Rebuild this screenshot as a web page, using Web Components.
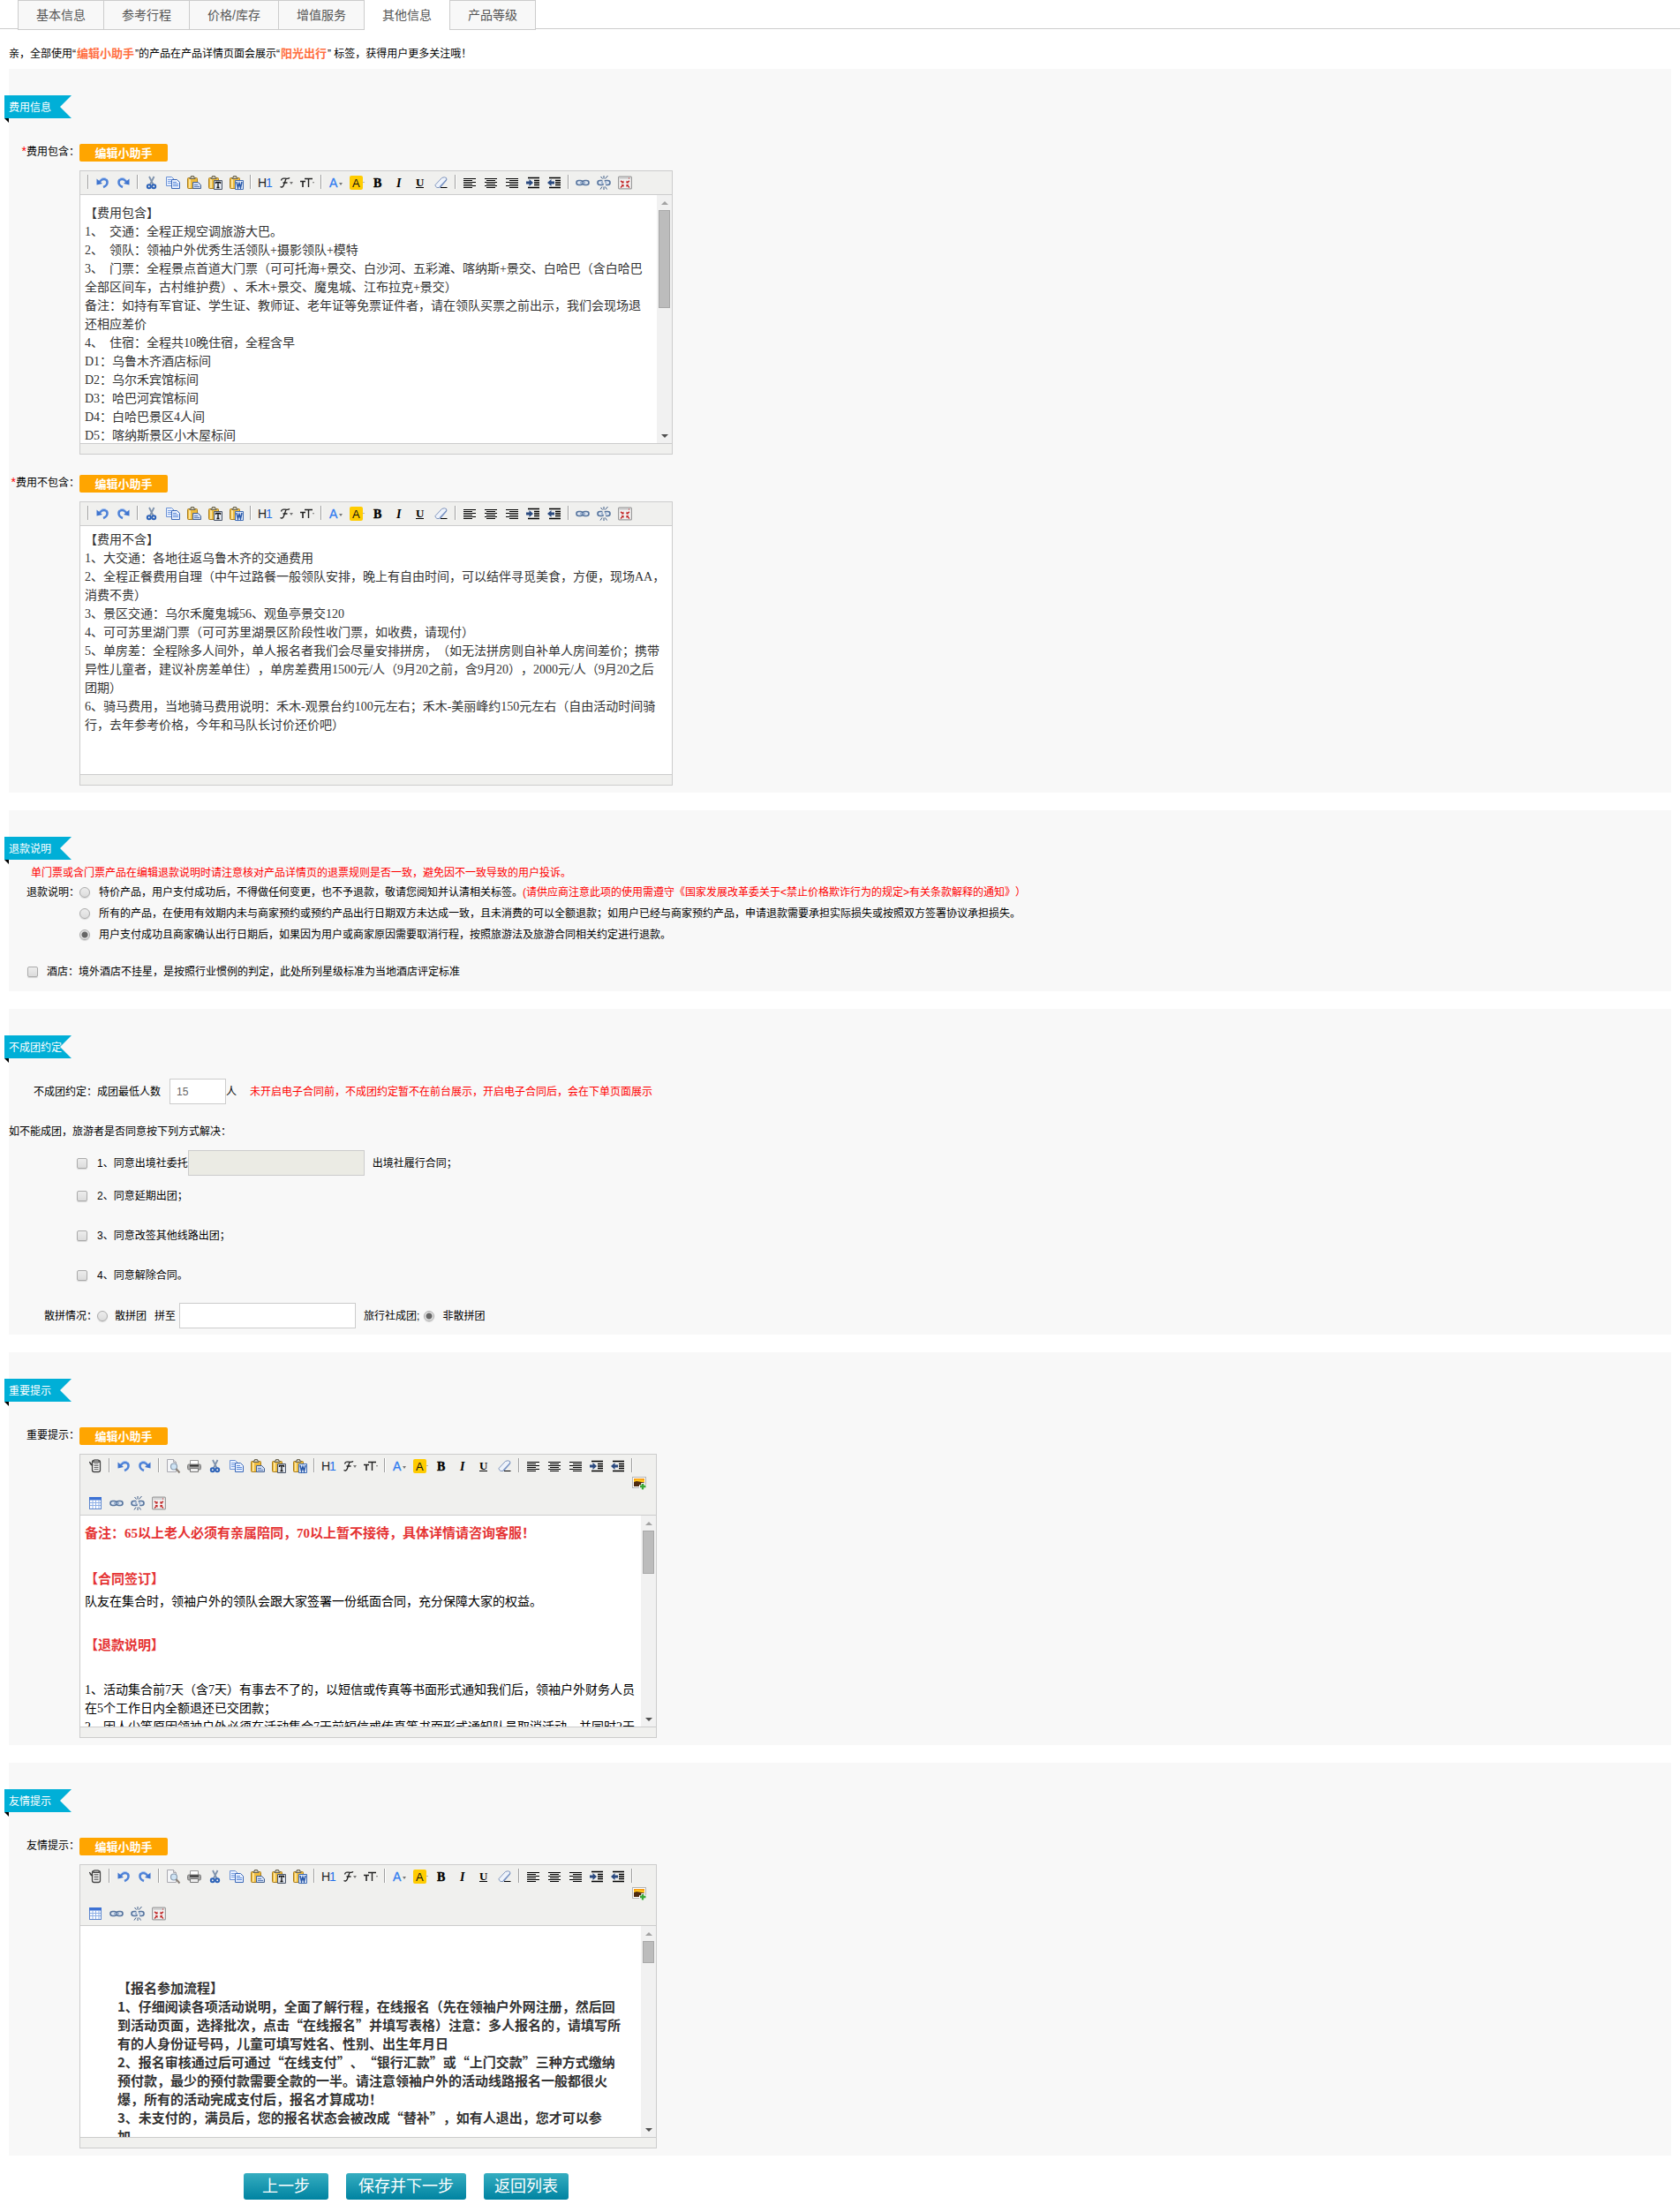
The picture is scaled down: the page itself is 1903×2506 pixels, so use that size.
<!DOCTYPE html>
<html lang="zh-CN">
<head>
<meta charset="utf-8">
<title>其他信息</title>
<style>
  html { text-spacing-trim: space-all; }
  body {
    margin: 0;
    background: #fff;
    color: #000;
    font: 12px/18px "Liberation Sans", "Noto Sans CJK SC", sans-serif;
  }
</style>
</head>
<body>
<product-form></product-form>

<script>
const define = (name, html, setup) => customElements.define(name, class extends HTMLElement {
  constructor() {
    super();
    this.attachShadow({ mode: "open" });
    const t = document.createElement("template");
    t.innerHTML = html;
    this.shadowRoot.append(t.content.cloneNode(true));
  }
  connectedCallback() {
    if (setup && !this.ready) { this.ready = true; setup(this, this.shadowRoot); }
  }
});

/* ---------- toolbar icons, 16 x 16 ---------- */
const caret = (x, y = 7) => `<path d="M${x} ${y}h4l-2 3z" fill="#777"/>`;
const lines = (rows) => rows.map(([x, w], i) => `<path d="M${x} ${3.5 + i * 2}h${w}" stroke="#000"/>`).join("");
const clipboard = `<rect x=".5" y="2.5" width="11" height="12" rx="1" fill="#eebb3e" stroke="#a87c1c"/>
  <path d="M2 4h2v10H2z" fill="#fbe39a"/><path d="M3 3.5h6V2H7.500V.5h-3V2H3z" fill="#cfc9b4" stroke="#6d6650"/>`;
const chain = `<g fill="#dfe7f2" stroke="#56749d" stroke-width="1.600"><rect x="1" y="5.500" width="7" height="5" rx="2.500"/><rect x="8" y="5.500" width="7" height="5" rx="2.500"/></g><path d="M5 8h6" stroke="#8aa3c4" stroke-width="1.500"/>`;
const icons = {
  source: `<path d="M4.500 3.500v9q0 2 2 2h5q2 0 2-2v-9q0-2-2-2h-5q-2 0-2 2z" fill="#f4f4f4" stroke="#444" stroke-width="1.300"/><path d="M6.500 1h5l1 2.500h-7z" fill="#aaa" stroke="#444"/><path d="M6.500 5.500h5M6.500 7.500h5M6.500 9.500h5M6.500 11.500h5" stroke="#666"/><path d="M1 3l4 3.500-.5 1L2 5.500v-2" fill="#666" stroke="#333"/>`,
  undo: `<path d="M5 7c2-4 8-4 8.500 0 .3 3-2 5-4.500 6" fill="none" stroke="#4f83d8" stroke-width="2.600"/><path d="M5 5c2-3 6-3.500 8-1" fill="none" stroke="#a9c5f2"/><path d="M1.500 3.500v7L8 9z" fill="#3e74cf"/>`,
  redo: `<path d="M11 7c-2-4-8-4-8.500 0-.3 3 2 5 4.500 6" fill="none" stroke="#4f83d8" stroke-width="2.600"/><path d="M11 5c-2-3-6-3.500-8-1" fill="none" stroke="#a9c5f2"/><path d="M14.500 3.500v7L8 9z" fill="#3e74cf"/>`,
  preview: `<path d="M1.500.5h7l3 3v11h-10z" fill="#f5f6f8" stroke="#a9a9b0"/><path d="M8.500.5v3h3" fill="#ddd" stroke="#a9a9b0"/><circle cx="9" cy="8.500" r="3.500" fill="#cfe4f5" stroke="#8b9db0" stroke-width="1.200"/><path d="M11.500 11l4 4.500" stroke="#8a8178" stroke-width="2"/>`,
  print: `<path d="M3.500 6V1.500h9V6" fill="#fff" stroke="#999"/><rect x=".5" y="6" width="15" height="6" rx="1.500" fill="#a5a5a5" stroke="#7d7d7d"/><path d="M3 7.500h10" stroke="#333" stroke-width="2"/><path d="M3.500 10.500h9v4h-9z" fill="#eee" stroke="#777"/>`,
  cut: `<path d="M5 1l4.500 9M10.500 1L6 10" stroke="#7f93ad" stroke-width="1.800"/><g fill="none" stroke="#2c62b8" stroke-width="2"><circle cx="4.800" cy="12.300" r="2"/><circle cx="10.200" cy="12.300" r="2"/></g>`,
  copy: `<path d="M.5 1.500h6l3 3v7h-9z" fill="#e9f1ff" stroke="#6c92d4"/><path d="M2 4.500h4M2 6.500h5M2 8.500h5" stroke="#7ba1e2"/><path d="M6.500 4.500h6l3 3v7h-9z" fill="#e9f1ff" stroke="#3c69b8"/><path d="M8 7.500h4M8 9.500h6M8 11.500h6" stroke="#5d8bd9"/>`,
  paste: `${clipboard}<path d="M6.500 7.500h6l3 3v4h-9z" fill="#cfdcf3" stroke="#44608f"/><path d="M8 10.500h4M8 12.500h6" stroke="#5f7fb6"/>`,
  pasteText: `${clipboard}<path d="M6.500 5.500h9v10h-9z" fill="#dfe4ec" stroke="#4a5568"/><path d="M8 7.500h6M11 7v7M9.500 13.500h3M8.500 7v2M13.500 7v2" stroke="#111" stroke-width="1.300"/>`,
  pasteWord: `${clipboard}<path d="M6.500 5.500h9v10h-9z" fill="#e4edfb" stroke="#3f6db5"/><path d="M8 7l1.500 6.500L11 8.500l1.500 5L14 7" fill="none" stroke="#2757a8" stroke-width="1.500"/>`,
  heading: `<text x="0" y="12.500" font-family="Liberation Sans" font-size="14" fill="#222">H</text><text x="9" y="12.500" font-family="Liberation Sans" font-size="14" fill="#1f70ea">1</text>`,
  font: `<path d="M1.500 12.500c1.500 1 3.200.5 4-2L8 3.500M2.500 5.500C3 3 5 2.800 7 3.200s4 .5 5-.8M4.500 8h5" fill="none" stroke="#222" stroke-width="1.300"/>${caret(12)}`,
  size: `<path d="M0 6.500h6M3 6v7" stroke="#222" stroke-width="1.600"/><path d="M5 3.500h9M9.500 3v10" stroke="#222" stroke-width="1.400"/><path d="M14 7h2l-1 2z" fill="#777"/>`,
  color: `<text x="1" y="13" font-family="Liberation Sans" font-size="14" fill="#2f7cf0" stroke="#2f7cf0" stroke-width=".3">A</text>${caret(12, 8)}`,
  highlight: `<rect x="0" y="0" width="15" height="16" rx="2" fill="#fc0"/><text x="3" y="12.500" font-family="Liberation Sans" font-size="13" fill="#111">A</text><path d="M15.500 7.500h1" stroke="#777"/>`,
  bold: `<text x="3" y="13" font-family="Liberation Serif" font-weight="bold" font-size="14" fill="#000" stroke="#000" stroke-width=".4">B</text>`,
  italic: `<text x="5" y="13" font-family="Liberation Serif" font-weight="bold" font-style="italic" font-size="14" fill="#000">I</text>`,
  underline: `<text x="3" y="11.500" font-family="Liberation Serif" font-weight="bold" font-size="13" fill="#000">U</text><path d="M3 13.500h9" stroke="#000"/>`,
  eraser: `<path d="M1 10.500L8.500 2.500q3-1.500 5 0 1 1.500-.5 3.500L6 13.500H3q-2-1-2-3z" fill="#eef3fb" stroke="#8296bd"/><path d="M5.500 12.500L13 4.500q1-1 .5-2 1.500 1.500 0 3.500L7 13.500z" fill="#7a94c4"/><path d="M7 13.500h7.500" stroke="#000"/>`,
  left: lines([[1, 14], [1, 10], [1, 14], [1, 10], [1, 14], [1, 10]]),
  center: lines([[1, 14], [3, 10], [1, 14], [3, 10], [1, 14], [3, 10]]),
  right: lines([[1, 14], [5, 10], [1, 14], [5, 10], [1, 14], [5, 10]]),
  indent: `<path d="M2 2.500h13M2 13.500h13M9 5.500h6M9 8h6M9 10.500h6" stroke="#000" stroke-width="1.300"/><path d="M0 6.500h3.500V4L8 8l-4.500 4V9.500H0z" fill="#2b4a80"/>`,
  outdent: `<path d="M2 2.500h13M2 13.500h13M9 5.500h6M9 8h6M9 10.500h6" stroke="#000" stroke-width="1.300"/><path d="M8 6.500H4.500V4L0 8l4.500 4V9.500H8z" fill="#2b4a80"/>`,
  image: `<rect x=".5" y="1.500" width="15" height="12" fill="#fff" stroke="#b5b5b5"/><path d="M2 3h12v4H2z" fill="#f79a12"/><path d="M2 5l4-1 8 1v2H2z" fill="#ffc61a"/><path d="M2 7l3-1 9 1.500V12H2z" fill="#4d2a10"/><path d="M12 8v8M8 12h8" stroke="#fff" stroke-width="3.600"/><path d="M12 9v6.500M9 12h6.500" stroke="#3aa637" stroke-width="2.400"/>`,
  table: `<rect x="1.500" y="1.500" width="13" height="13" fill="#fff" stroke="#5d86cd"/><path d="M1 1h14v3.500H1z" fill="#3d72d4"/><path d="M5 4v10M8.500 4v10M12 4v10M2 7.500h12M2 10.500h12" stroke="#8fb0e6"/>`,
  link: chain,
  unlink: `${chain}<path d="M7 4l2.500 8" stroke="#efefee" stroke-width="2"/><path d="M8 0v3.500M4.500 1l2 2.500M12.500 0L9.500 3.500M8 12.500V16M4 15.500l2-3M11.500 15.500l-2-3" stroke="#3f5c86"/>`,
  fullscreen: `<rect x=".6" y="1.100" width="14.800" height="13.800" rx="1" fill="#f3f3f3" stroke="#9c9c9c" stroke-width="1.200"/><path d="M1.500 2h13v2h-13z" fill="#d5d5d5"/><path d="M12 3h1" stroke="#c22"/><path d="M3 6l3.200 1.800M13 6L9.800 7.800M3 13.500l3.200-3M13 13.500l-3.200-3" stroke="#c22a2a" stroke-width="1.500"/><path d="M6.500 5.500v3h-3zM9.500 5.500v3h3zM6.500 13v-3h-3zM9.500 13v-3h3z" fill="#c22a2a"/>`
};

define("tool-row", `
<style>
  :host { display: flex; }
  button { width: 24px; height: 22px; padding: 3px 4px; border: 0; margin: 0; background: none; }
  svg { display: block; width: 16px; height: 16px; overflow: visible; }
  i { width: 0; height: 16px; margin: 2px 3px; border-left: 1px solid #a0a0a0; border-right: 1px solid #fff; }
</style>`, (el, root) => {
  for (const name of el.getAttribute("tools").split(" ")) {
    if (name === "|") { root.append(document.createElement("i")); continue; }
    const b = document.createElement("button");
    b.type = "button";
    b.setAttribute("aria-label", name);
    b.innerHTML = `<svg viewBox="0 0 16 16" aria-hidden="true">${icons[name]}</svg>`;
    root.append(b);
  }
});

const editTools = "cut copy paste pasteText pasteWord | heading font size | color highlight bold italic underline eraser | left center right indent outdent |";

define("rich-editor", `
<style>
  :host { display: block; width: 672px; box-sizing: border-box; border: 1px solid #ccc; background: #fff; }
  :host([full]) { width: 654px; --body-height: 239px; }
  .bar { padding: 2px 5px; background: #f0f0ee; border-bottom: 1px solid #ccc; }
  .image { justify-content: flex-end; height: 20px; padding-right: 2px; margin-top: -3px; margin-bottom: 3px; }
  .body { display: flex; height: var(--body-height, 281px); overflow: hidden; }
  .text { flex: 1; min-width: 0; padding: 5px; overflow: hidden; outline: 0; white-space: nowrap;
    font: 14px/21px "Liberation Serif", "Noto Sans CJK SC", serif; color: #333; }
  .scroll { display: none; flex-direction: column; align-items: center; width: 17px; background: #f1f1f1; }
  :host([thumb]) .scroll { display: flex; }
  .arrow { height: 17px; display: flex; align-items: center; }
  .arrow::before { content: ""; border: 4px solid transparent; border-top-width: 0; border-bottom-color: #a3a3a3; }
  .down { margin-top: auto; }
  .down::before { border-width: 4px 4px 0; border-color: #505050 transparent transparent; }
  .thumb { width: 13px; height: var(--thumb); box-sizing: border-box; background: #bcbcbc; border: 1px solid #a8a8a8; }
  .status { height: 11px; background: #f0f0ee; border-top: 1px solid #ccc; }
</style>
<div class="bar" role="toolbar"></div>
<div class="body">
  <div class="text" role="textbox" aria-multiline="true" contenteditable="true" spellcheck="false"><slot></slot></div>
  <div class="scroll"><span class="arrow"></span><span class="thumb"></span><span class="arrow down"></span></div>
</div>
<div class="status"></div>`, (el, root) => {
  root.querySelector(".text").setAttribute("aria-label", el.getAttribute("label"));
  root.querySelector(".bar").innerHTML = el.hasAttribute("full")
    ? `<tool-row tools="source | undo redo | preview print ${editTools}"></tool-row>
       <tool-row class="image" tools="image"></tool-row>
       <tool-row tools="table link unlink fullscreen"></tool-row>`
    : `<tool-row tools="| undo redo | ${editTools} link unlink fullscreen"></tool-row>`;
  if (el.hasAttribute("thumb")) el.style.setProperty("--thumb", el.getAttribute("thumb") + "px");
});

define("page-tabs", `
<style>
  :host { display: block; }
  nav { display: flex; height: 32px; padding-left: 20px; border-bottom: 1px solid #ccc; }
  a { height: 32px; border: 1px solid #ccc; border-left-width: 0; background: #f8f8f8; padding: 0 20px;
    font-size: 14px; line-height: 33px; color: #555; text-decoration: none; }
  a:first-child, .on + a { border-left-width: 1px; }
  .on { background: #fff; border-color: #fff; border-right-width: 0; }
</style>
<nav>
  <a href="#base">基本信息</a><a href="#route">参考行程</a><a href="#price">价格/库存</a><a href="#service">增值服务</a><a href="#other" class="on" aria-current="page">其他信息</a><a href="#level">产品等级</a>
</nav>`);

define("panel-section", `
<style>
  :host { display: block; margin: 0 10px 20px; padding-top: 30px; background: #f8f8f8; }
  h2 { position: relative; width: 76px; height: 26px; margin: 0 0 0 -5px; font-size: 12px; font-weight: normal; line-height: 28px; color: #fff; }
  h2 span { display: block; height: 26px; padding-left: 5px; background: #00afd7; white-space: nowrap;
    clip-path: polygon(0 0, 100% 0, calc(100% - 13px) 50%, 100% 100%, 0 100%); }
  h2::after { content: ""; position: absolute; left: 0; top: 100%; border-style: solid; border-width: 0 5px 5px 0; border-color: transparent #000 transparent transparent; }
</style>
<h2><span></span></h2>
<slot></slot>`, (el, root) => { root.querySelector("span").textContent = el.getAttribute("heading"); });

define("editor-field", `
<style>
  :host { display: grid; grid-template-columns: 80px 1fr; row-gap: 10px; padding: 29px 0 8px; }
  :host(:not(:last-of-type)) { padding-bottom: 0; }
  :host(:not(:first-of-type)) { padding-top: 23px; }
  .label { text-align: right; white-space: nowrap; }
  .label b { font-size: 14px; font-weight: normal; line-height: 1; color: red; }
  button { width: 100px; height: 20px; padding: 0; border: 0; border-radius: 2px; background: #ffa500; color: #fff;
    font: bold 13px/22px "Liberation Sans", "Noto Sans CJK SC", sans-serif; }
  .edit { grid-column: 2; }
</style>
<span class="label"><b></b><span></span></span>
<div><button type="button">编辑小助手</button></div>
<div class="edit"><slot></slot></div>`, (el, root) => {
  if (el.hasAttribute("required")) root.querySelector("b").textContent = "*";
  root.querySelector(".label span").textContent = el.getAttribute("label") + "：";
});

const controls = `
  label { display: flex; align-items: center; }
  input { box-sizing: border-box; margin: 0; font: inherit; }
  input[type=radio], input[type=checkbox] { appearance: none; flex: none; width: 12px; height: 12px;
    border: 1px solid #ababab; border-radius: 2px; background: linear-gradient(#ededed, #dcdcdc); box-shadow: 0 1px 1px #0002; }
  input[type=radio] { border-radius: 50%; }
  input[type=radio]:checked { background: radial-gradient(circle, #666 0 3px, #e6e6e6 4px); }
  input[type=text] { height: 29px; padding: 0 7px; border: 1px solid #ccc; background: #fff; color: #666; }
  input:disabled { background: #ebebe4; }
  .red { color: red; }
  p { margin: 0; }`;

define("refund-terms", `
<style>${controls}
  :host { display: block; padding: 6px 0 10px; }
  .red.tip { margin: 0 0 1px 25px; }
  .choices { display: grid; grid-template-columns: 80px 1fr; line-height: 24px; }
  .choices > span { text-align: right; }
  label { gap: 10px; height: 24px; white-space: nowrap; }
  .hotel { margin: 18px 0 0 21px; }
</style>
<p class="red tip">单门票或含门票产品在编辑退款说明时请注意核对产品详情页的退票规则是否一致，避免因不一致导致的用户投诉。</p>
<div class="choices" role="radiogroup" aria-label="退款说明">
  <span>退款说明：</span>
  <div>
    <label><input type="radio" name="refund"><span>特价产品，用户支付成功后，不得做任何变更，也不予退款，敬请您阅知并认清相关标签。<span class="red">(请供应商注意此项的使用需遵守《国家发展改革委关于&lt;禁止价格欺诈行为的规定&gt;有关条款解释的通知》）</span></span></label>
    <label><input type="radio" name="refund"><span>所有的产品，在使用有效期内未与商家预约或预约产品出行日期双方未达成一致，且未消费的可以全额退款；如用户已经与商家预约产品，申请退款需要承担实际损失或按照双方签署协议承担损失。</span></label>
    <label><input type="radio" name="refund" checked><span>用户支付成功且商家确认出行日期后，如果因为用户或商家原因需要取消行程，按照旅游法及旅游合同相关约定进行退款。</span></label>
  </div>
</div>
<label class="hotel"><input type="checkbox"><span>酒店：境外酒店不挂星，是按照行业惯例的判定，此处所列星级标准为当地酒店评定标准</span></label>`);

define("group-terms", `
<style>${controls}
  :host { display: block; padding: 23px 0 7px; }
  .row { display: flex; align-items: center; white-space: nowrap; }
  .min { padding-left: 28px; margin-bottom: 22px; }
  .min input { width: 64px; margin-left: 10px; }
  .min .red { margin-left: 15px; }
  .list { display: grid; gap: 27px; padding: 14px 0 22px 77px; }
  .first { padding-left: 77px; margin-top: 12px; }
  .check { gap: 11px; }
  .wide { width: 200px; }
  .after { margin-left: 9px; }
  .mix { padding-left: 40px; }
  .mix label { gap: 8px; }
  .mix .wide { margin-left: 4px; }
  .mix .last { margin-left: 5px; gap: 9px; }
</style>
<div class="row min"><label for="min">不成团约定：成团最低人数</label><input id="min" type="text" value="15"><span>人</span><span class="red">未开启电子合同前，不成团约定暂不在前台展示，开启电子合同后，会在下单页面展示</span></div>
<p>如不能成团，旅游者是否同意按下列方式解决：</p>
<div class="row first"><label class="check"><input type="checkbox"><span>1、同意出境社委托</span></label><input class="wide" type="text" disabled aria-label="出境社"><span class="after">出境社履行合同；</span></div>
<div class="list">
  <label class="check"><input type="checkbox"><span>2、同意延期出团；</span></label>
  <label class="check"><input type="checkbox"><span>3、同意改签其他线路出团；</span></label>
  <label class="check"><input type="checkbox"><span>4、同意解除合同。</span></label>
</div>
<div class="row mix"><span>散拼情况：</span><label><input type="radio" name="mix"><span>散拼团</span></label><label for="agency" class="after">拼至</label><input id="agency" class="wide" type="text"><span class="after">旅行社成团;</span><label class="last"><input type="radio" name="mix" checked><span>非散拼团</span></label></div>`);

define("page-actions", `
<style>
  :host { display: flex; gap: 20px; padding: 0 0 14px 276px; }
  button { width: 96px; height: 30px; padding: 0; border: 0; border-radius: 3px; color: #fff;
    background: linear-gradient(#35adc0, #0083a1); font: 18px/30px "Liberation Sans", "Noto Sans CJK SC", sans-serif; }
  .wide { width: 136px; }
</style>
<button type="button">上一步</button><button type="submit" class="wide">保存并下一步</button><button type="button">返回列表</button>`);

define("product-form", `
<style>
  :host { display: block; }
  .notice { margin: 0; padding: 19px 10px 8px; }
  .notice b { margin: 0 1px; font-size: 13px; line-height: 1; color: #ff6f42; }
  p { margin: 0; }
  .top { padding-top: 5px; }
  .important { padding-top: 2px; color: #000; line-height: 26px; }
  .em { font-size: 15px; font-weight: bold; color: #e53333; }
  .tight { line-height: 21px; padding-top: 27px; }
  .gap { padding-top: 26px; }
  .near { padding-top: 23px; }
  .friendly { padding: 54px 0 0 37px; font: bold 15px/21px "Noto Sans CJK SC", sans-serif; }
</style>
<page-tabs></page-tabs>
<p class="notice">亲，全部使用“<b>编辑小助手</b>”的产品在产品详情页面会展示“<b>阳光出行</b>” 标签，获得用户更多关注哦！</p>

<panel-section heading="费用信息">
  <editor-field label="费用包含" required>
    <rich-editor label="费用包含" thumb="111">
      <p class="top">【费用包含】<br>1、&nbsp; 交通：全程正规空调旅游大巴。<br>2、&nbsp; 领队：领袖户外优秀生活领队+摄影领队+模特<br>3、&nbsp; 门票：全程景点首道大门票（可可托海+景交、白沙河、五彩滩、喀纳斯+景交、白哈巴（含白哈巴<br>全部区间车，古村维护费）、禾木+景交、魔鬼城、江布拉克+景交）<br>备注：如持有军官证、学生证、教师证、老年证等免票证件者，请在领队买票之前出示，我们会现场退<br>还相应差价<br>4、&nbsp; 住宿：全程共10晚住宿，全程含早<br>D1：乌鲁木齐酒店标间<br>D2：乌尔禾宾馆标间<br>D3：哈巴河宾馆标间<br>D4：白哈巴景区4人间<br>D5：喀纳斯景区小木屋标间</p>
    </rich-editor>
  </editor-field>
  <editor-field label="费用不包含" required>
    <rich-editor label="费用不包含">
      <p>【费用不含】<br>1、大交通：各地往返乌鲁木齐的交通费用<br>2、全程正餐费用自理（中午过路餐一般领队安排，晚上有自由时间，可以结伴寻觅美食，方便，现场AA，<br>消费不贵）<br>3、景区交通：乌尔禾魔鬼城56、观鱼亭景交120<br>4、可可苏里湖门票（可可苏里湖景区阶段性收门票，如收费，请现付）<br>5、单房差：全程除多人间外，单人报名者我们会尽量安排拼房，（如无法拼房则自补单人房间差价；携带<br>异性儿童者，建议补房差单住），单房差费用1500元/人（9月20之前，含9月20），2000元/人（9月20之后<br>团期）<br>6、骑马费用，当地骑马费用说明：禾木-观景台约100元左右；禾木-美丽峰约150元左右（自由活动时间骑<br>行，去年参考价格，今年和马队长讨价还价吧）</p>
    </rich-editor>
  </editor-field>
</panel-section>

<panel-section heading="退款说明"><refund-terms></refund-terms></panel-section>
<panel-section heading="不成团约定"><group-terms></group-terms></panel-section>

<panel-section heading="重要提示">
  <editor-field label="重要提示">
    <rich-editor label="重要提示" full thumb="49">
      <div class="important">
        <p class="em">备注：65以上老人必须有亲属陪同，70以上暂不接待，具体详情请咨询客服！</p>
        <p class="em gap">【合同签订】</p>
        <p>队友在集合时，领袖户外的领队会跟大家签署一份纸面合同，充分保障大家的权益。</p>
        <p class="em near">【退款说明】</p>
        <p class="tight">1、活动集合前7天（含7天）有事去不了的，以短信或传真等书面形式通知我们后，领袖户外财务人员<br>在5个工作日内全额退还已交团款；<br>2、因人少等原因领袖户外必须在活动集合7天前短信或传真等书面形式通知队员取消活动，并同时2天</p>
      </div>
    </rich-editor>
  </editor-field>
</panel-section>

<panel-section heading="友情提示">
  <editor-field label="友情提示">
    <rich-editor label="友情提示" full thumb="25">
      <p class="friendly">【报名参加流程】<br>1、仔细阅读各项活动说明，全面了解行程，在线报名（先在领袖户外网注册，然后回<br>到活动页面，选择批次，点击“在线报名”并填写表格）注意：多人报名的，请填写所<br>有的人身份证号码，儿童可填写姓名、性别、出生年月日<br>2、报名审核通过后可通过“在线支付”、“银行汇款”或“上门交款”三种方式缴纳<br>预付款，最少的预付款需要全款的一半。请注意领袖户外的活动线路报名一般都很火<br>爆，所有的活动完成支付后，报名才算成功！<br>3、未支付的，满员后，您的报名状态会被改成“替补”，如有人退出，您才可以参<br>加</p>
    </rich-editor>
  </editor-field>
</panel-section>

<page-actions></page-actions>`);
</script>
</body>
</html>
